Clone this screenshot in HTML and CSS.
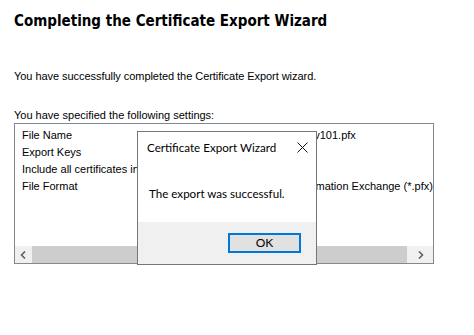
FILE: index.html
```html
<!DOCTYPE html>
<html lang="en">
<head>
    <meta charset="UTF-8">
    <title>Certificate Export Wizard</title>
    <link rel="stylesheet" href="styles.css">
</head>
<body>
    <div class="wizard">
        <h1 class="wizard-title">Completing the Certificate Export Wizard</h1>
        <p class="intro">You have successfully completed the Certificate Export wizard.</p>
        <p class="label">You have specified the following settings:</p>

        <div class="settings">
            <div class="settings-rows">
                <div class="row"><span class="key">File Name</span><span class="val">C:\Temp\cakpv101.pfx</span></div>
                <div class="row"><span class="key">Export Keys</span><span class="val">Yes</span></div>
                <div class="row"><span class="key">Include all certificates in the certification path</span><span class="val">Yes</span></div>
                <div class="row"><span class="key">File Format</span><span class="val">Personal Information Exchange (*.pfx)</span></div>
            </div>
            <div class="hscroll">
                <div class="arrow">
                    <svg width="7" height="8" viewBox="0 0 7 8"><path d="M5 0.5 L1.5 4 L5 7.5" fill="none" stroke="#606060" stroke-width="1.6"/></svg>
                </div>
                <div class="thumb"></div>
                <div class="arrow">
                    <svg width="7" height="8" viewBox="0 0 7 8"><path d="M2 0.5 L5.5 4 L2 7.5" fill="none" stroke="#606060" stroke-width="1.6"/></svg>
                </div>
            </div>
        </div>
    </div>

    <!-- message box shown on top of the wizard -->
    <div class="msgbox">
        <div class="msgbox-head">
            <span>Certificate Export Wizard</span>
            <svg class="close" width="11" height="11" viewBox="0 0 11 11"><path d="M0.5 0.5 L10.5 10.5 M10.5 0.5 L0.5 10.5" stroke="#111" stroke-width="1"/></svg>
        </div>
        <div class="msgbox-body">The export was successful.</div>
        <div class="msgbox-foot">
            <button class="ok">OK</button>
        </div>
    </div>
</body>
</html>
```

FILE: styles.css
```css
body {
    margin: 0;
    background: #fff;
    color: #000;
    font-family: 'Liberation Sans', Arial, sans-serif;
    font-size: 11px;
}
.wizard {
    padding: 11px 0 0 14px;
}
.wizard-title {
    margin: 0;
    font-family: 'DejaVu Sans Condensed', 'DejaVu Sans', sans-serif;
    font-stretch: condensed;
    font-size: 15px;
    font-weight: bold;
    line-height: 20px;
}
.intro {
    margin: 39px 0 0;
    line-height: 13px;
    letter-spacing: -0.05px;
}
.label {
    margin: 26px 0 0;
    line-height: 13px;
}
.settings {
    width: 418px;
    height: 139px;
    margin-top: 1px;
    border: 1px solid #828790;
    display: flex;
    flex-direction: column;
    overflow: hidden;
}
.settings-rows {
    flex: 1;
    padding: 3px 0 0 7px;
}
.row {
    display: flex;
    height: 17px;
    line-height: 17px;
    white-space: nowrap;
}
.key {
    width: 225px;
    overflow: hidden;
}
.hscroll {
    height: 17px;
    display: flex;
    background: #f0f0f0;
}
.arrow {
    width: 17px;
    display: flex;
    align-items: center;
    justify-content: center;
}
.arrow:last-child {
    width: 26px;
}
.thumb {
    flex: 1;
    background: #cdcdcd;
}
.msgbox {
    position: absolute;
    left: 137px;
    top: 131px;
    width: 178px;
    height: 132px;
    border: 1px solid #767676;
    background: #fff;
    font-family: Lato, 'Noto Sans', sans-serif;
    font-size: 11.6px;
    display: flex;
    flex-direction: column;
}
.msgbox-head {
    height: 30px;
    padding: 0 8px 0 9px;
    display: flex;
    align-items: center;
    justify-content: space-between;
}
.msgbox-body {
    flex: 1;
    padding: 25px 0 0 11px;
}
.msgbox-foot {
    height: 42px;
    background: #f0f0f0;
    display: flex;
    justify-content: flex-end;
    align-items: flex-start;
}
.ok {
    margin: 11px 15px 0 0;
    width: 73px;
    height: 20px;
    border: 2px solid #0078d7;
    background: #e1e1e1;
    font-family: Lato, 'Noto Sans', sans-serif;
    font-size: 12px;
    padding: 0;
    line-height: 14px;
}
```
